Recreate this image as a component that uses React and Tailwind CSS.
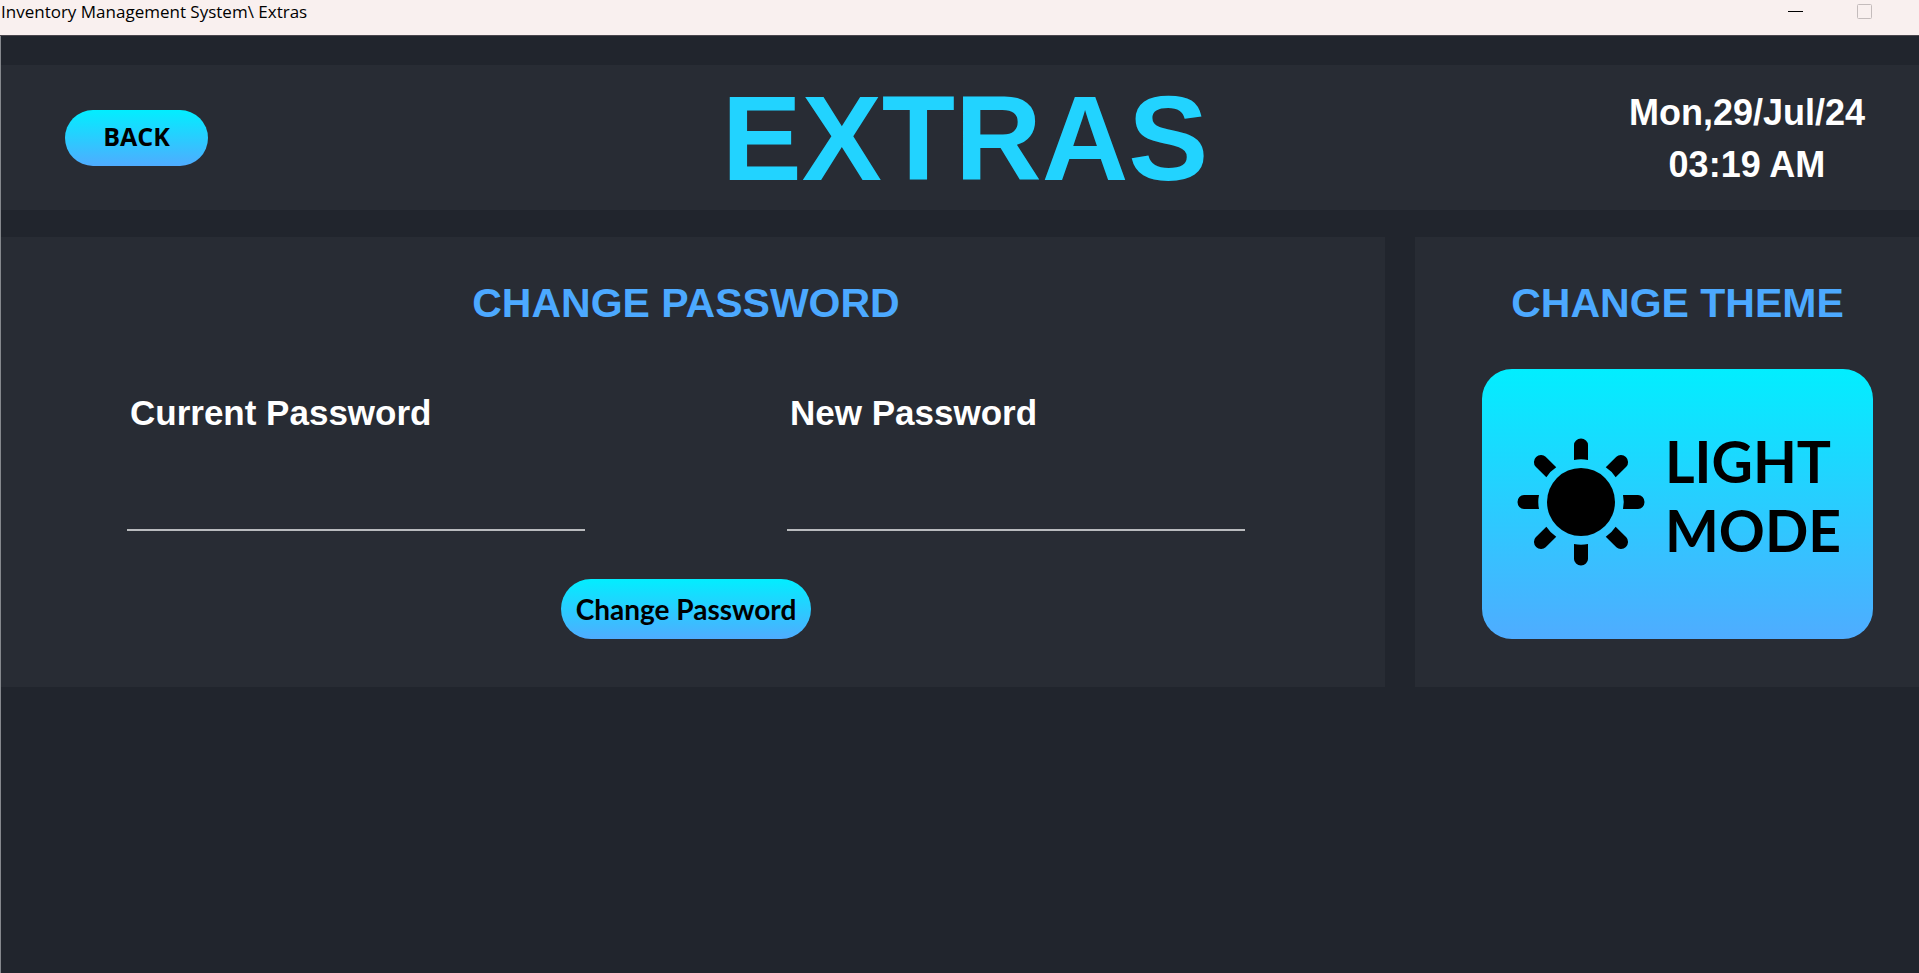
import React from "react";

const heading =
  "text-center text-[41px] leading-[48px] font-bold text-[#4ca9ff]";
const gradient = "bg-linear-to-b/srgb from-[#02eeff] to-[#4facff] text-black";

function TitleBar() {
  return (
    <header className="flex h-9 items-start justify-between border-b border-[#4a464d] bg-[#f9f0ef] pr-[46px] pl-px">
      <span className="font-['Open_Sans'] text-[17px] leading-6 text-black">
        Inventory Management System\ Extras
      </span>
      <div className="flex gap-[53px]">
        <button
          type="button"
          aria-label="Minimize"
          className="flex h-6 w-4 items-center justify-center"
        >
          <svg width="16" height="16" viewBox="0 0 16 16">
            <path d="M0 7.5h15" stroke="#000" />
          </svg>
        </button>
        <button
          type="button"
          aria-label="Maximize"
          disabled
          className="flex h-6 w-4 items-center justify-center"
        >
          <svg width="16" height="16" viewBox="0 0 16 16" fill="none">
            <rect x="0.5" y="0.5" width="14" height="14" rx="1" stroke="#c4bcbc" />
          </svg>
        </button>
      </div>
    </header>
  );
}

function SunIcon() {
  const angles = [0, 45, 90, 135, 180, 225, 270, 315];
  return (
    <svg width="128" height="128" viewBox="-64 -64 128 128" className="shrink-0">
      <circle r="34" />
      {angles.map((a) => (
        <path
          key={a}
          transform={`rotate(${a})`}
          d="M-7 -42V-57A7 6.5 0 0 1 7 -57V-42Q0 -43.500 -7 -42Z"
        />
      ))}
    </svg>
  );
}

function PasswordField({ id, label }) {
  return (
    <div className="flex flex-col">
      <label
        htmlFor={id}
        className="pl-[3px] text-[35px] leading-10 font-bold text-white"
      >
        {label}
      </label>
      <input
        id={id}
        type="password"
        className="mt-[50px] h-12 w-full border-b-2 border-[#b9bbbe] bg-transparent text-2xl text-white outline-none"
      />
    </div>
  );
}

export default function App() {
  return (
    <div className="flex min-h-screen flex-col bg-[#21252d] font-['Liberation_Sans',Arial,sans-serif]">
      <TitleBar />
      <div className="flex grow flex-col border-l border-[#85888d] pt-[29px]">
        <section className="grid min-h-[145px] grid-cols-[1fr_auto_1fr] items-center bg-[#282c34] pr-[54px] pl-16">
          <button
            type="button"
            className={`h-14 w-[143px] rounded-full pb-0.5 font-['Open_Sans'] text-[25px] font-bold ${gradient}`}
          >
            BACK
          </button>
          <h1 className="text-[120px] leading-[140px] font-bold text-[#22d3ff]">
            EXTRAS
          </h1>
          <div className="justify-self-end pt-0.5 text-center text-[36px] leading-[52px] font-bold text-white">
            <p>Mon,29/Jul/24</p>
            <p>03:19 AM</p>
          </div>
        </section>

        <main className="mt-[27px] flex items-stretch gap-[30px]">
          <section className="grow bg-[#282c34] pt-[42px] pr-[140px] pb-12 pl-[126px]">
            <h2 className={heading}>CHANGE PASSWORD</h2>
            <form className="mt-[66px]" onSubmit={(e) => e.preventDefault()}>
              <div className="grid grid-cols-2 gap-[202px]">
                <PasswordField id="current-password" label="Current Password" />
                <PasswordField id="new-password" label="New Password" />
              </div>
              <div className="mt-12 flex justify-center">
                <button
                  type="submit"
                  className={`h-[60px] w-[250px] rounded-full font-['Lato'] text-[28px] font-bold whitespace-nowrap ${gradient}`}
                >
                  Change Password
                </button>
              </div>
            </form>
          </section>

          <section className="w-[504px] shrink-0 bg-[#282c34] pt-[42px] pr-[46px] pb-12 pl-[67px]">
            <h2 className={heading}>CHANGE THEME</h2>
            <button
              type="button"
              className={`mt-[42px] flex h-[270px] w-full items-center gap-5 rounded-[30px] pb-1 pl-[35px] text-left font-['Lato'] text-[57px] leading-[69px] font-bold ${gradient}`}
            >
              <SunIcon />
              <span className="pb-3">
                LIGHT
                <br />
                MODE
              </span>
            </button>
          </section>
        </main>
      </div>
    </div>
  );
}
